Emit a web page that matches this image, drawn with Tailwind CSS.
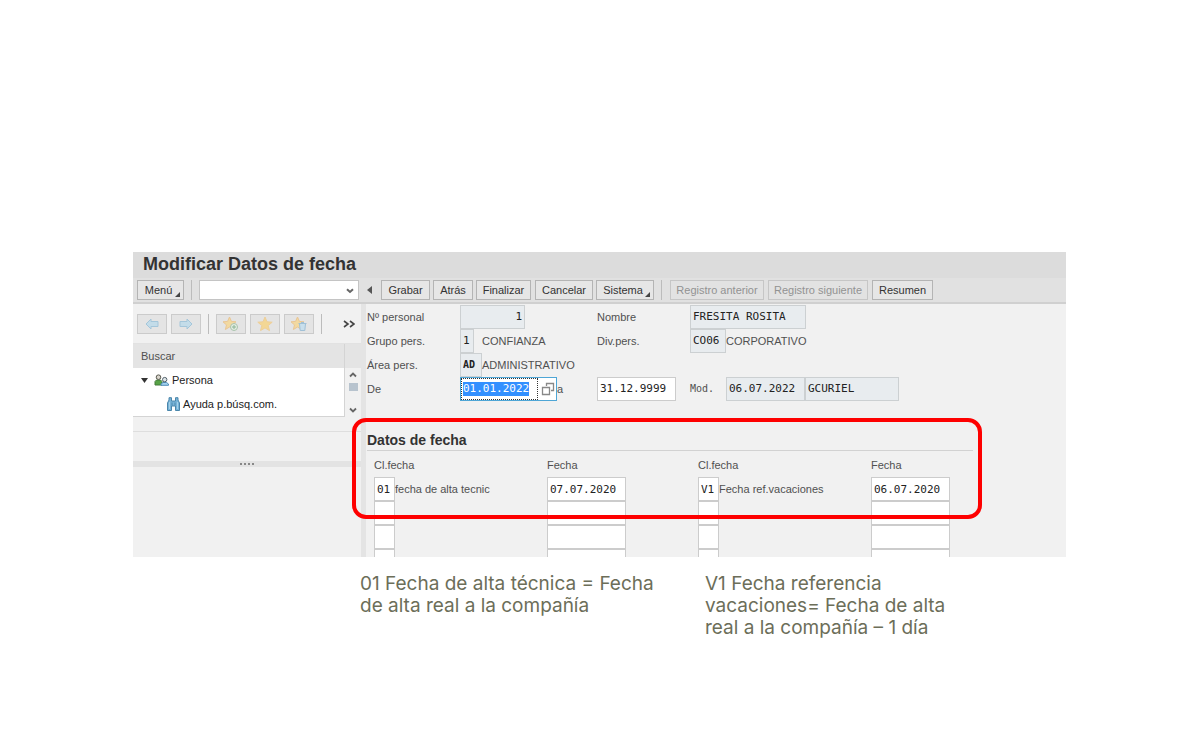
<!DOCTYPE html>
<html lang="es">
<head>
<meta charset="utf-8">
<title>Modificar Datos de fecha</title>
<script src="https://cdn.jsdelivr.net/npm/@tailwindcss/browser@4"></script>
</head>
<body class="min-h-screen bg-white text-[11px] leading-4 text-[#505050] font-['Liberation_Sans',Arial,sans-serif]">
<main class="pr-[134px] pl-[133px] pt-[252px]">
  <div class="bg-[#f1f1f1]">
    <header class="h-[26px] bg-[#dcdcdc] px-[10px]">
      <h1 class="text-[18px] leading-6 font-bold text-[#333]">Modificar Datos de fecha</h1>
    </header>

    <nav aria-label="Barra de herramientas" class="flex h-[26px] items-center border-b-2 border-[#d0d0d0] bg-[#e1e1e1] pl-1 text-[#333]">
      <button class="relative h-5 w-[47px] border border-[#b4b4b4] bg-[#e6e6e6] pr-1">Menú
        <svg class="absolute right-[3px] bottom-[2px] size-[5px]" viewBox="0 0 4 4"><path d="M4 0v4H0z" fill="#444"/></svg>
      </button>
      <span class="mx-[7px] h-5 w-px bg-[#bcbcbc]"></span>
      <div class="relative h-5 w-[160px]">
        <select aria-label="Comando" class="h-5 w-full appearance-none border border-[#c4c4c4] bg-white"><option></option></select>
        <svg class="pointer-events-none absolute top-[8px] right-[5px] h-[6px] w-2" viewBox="0 0 8 6"><path d="M1 1.2 4 4 7 1.2" fill="none" stroke="#666" stroke-width="2"/></svg>
      </div>
      <button aria-label="Contraer" class="mx-2 h-5 w-[6px]"><svg class="h-2 w-[5px]" viewBox="0 0 5 8"><path d="M5 0v8L0 4z" fill="#555"/></svg></button>
      <div class="flex gap-[3px]">
        <button class="h-5 w-[49px] border border-[#b4b4b4] bg-[#e6e6e6]">Grabar</button>
        <button class="h-5 w-10 border border-[#b4b4b4] bg-[#e6e6e6]">Atrás</button>
        <button class="h-5 w-[55px] border border-[#b4b4b4] bg-[#e6e6e6]">Finalizar</button>
        <button class="ml-px h-5 w-[58px] border border-[#b4b4b4] bg-[#e6e6e6]">Cancelar</button>
        <button class="relative h-5 w-[58px] border border-[#b4b4b4] bg-[#e6e6e6] pr-1">Sistema
          <svg class="absolute right-[3px] bottom-[2px] size-[5px]" viewBox="0 0 4 4"><path d="M4 0v4H0z" fill="#444"/></svg>
        </button>
      </div>
      <span class="mx-[7px] h-5 w-px bg-[#bcbcbc]"></span>
      <div class="flex gap-1">
        <button disabled class="ml-px h-5 w-[94px] border border-[#c6c6c6] bg-[#e2e2e2] text-[#929292]">Registro anterior</button>
        <button disabled class="h-5 w-[100px] border border-[#c6c6c6] bg-[#e2e2e2] text-[#929292]">Registro siguiente</button>
        <button class="h-5 w-[61px] border border-[#b4b4b4] bg-[#e6e6e6]">Resumen</button>
      </div>
    </nav>

    <div class="flex">
      <aside class="flex w-[228px] shrink-0 flex-col">
        <div class="flex h-10 items-center border-b border-[#e2e2e2] pl-1">
          <div class="flex gap-1">
            <button aria-label="Anterior" class="grid h-5 w-[30px] place-items-center border border-[#cbcbcb] bg-[#e4e4e4]">
              <svg class="h-3 w-[14px]" viewBox="0 0 14 12"><path d="M1 6 6 1v2.500h7v5H6V11z" fill="#c3dce9" stroke="#a4c6da"/></svg>
            </button>
            <button aria-label="Siguiente" class="grid h-5 w-[30px] place-items-center border border-[#cbcbcb] bg-[#e4e4e4]">
              <svg class="h-3 w-[14px]" viewBox="0 0 14 12"><path d="M13 6 8 1v2.500H1v5h7V11z" fill="#c3dce9" stroke="#a4c6da"/></svg>
            </button>
          </div>
          <span class="mx-[7px] h-5 w-px bg-[#bcbcbc]"></span>
          <div class="flex gap-1">
            <button aria-label="Añadir favorito" class="grid h-5 w-[30px] place-items-center border border-[#cbcbcb] bg-[#e4e4e4]">
              <svg class="h-4 w-[18px]" viewBox="0 0 18 16"><path d="m7.500 1 1.900 4.400 4.600.4-3.500 3.100 1.100 4.600-4.100-2.500-4.100 2.500 1.100-4.600L1 5.800l4.600-.4z" fill="#f2d9a0" stroke="#e9c695"/><circle cx="12" cy="11" r="3.500" fill="#e5eee5" stroke="#a9c3ac"/><path d="M12 9v4M10 11h4" stroke="#8db495"/></svg>
            </button>
            <button aria-label="Favoritos" class="grid h-5 w-[30px] place-items-center border border-[#cbcbcb] bg-[#e4e4e4]">
              <svg class="h-4 w-[16px]" viewBox="0 0 16 16"><path d="m8 1 2 4.800 5.200.4-4 3.400 1.300 5L8 11.900l-4.500 2.700 1.300-5-4-3.400L6 5.800z" fill="#f3d795" stroke="#edcf9a"/></svg>
            </button>
            <button aria-label="Borrar favorito" class="grid h-5 w-[30px] place-items-center border border-[#cbcbcb] bg-[#e4e4e4]">
              <svg class="h-4 w-[18px]" viewBox="0 0 18 16"><path d="m7.500 1 1.900 4.400 4.600.4-3.500 3.100 1.100 4.600-4.100-2.500-4.100 2.500 1.100-4.600L1 5.800l4.600-.4z" fill="#f2d9a0" stroke="#e9c695"/><path d="M8.500 7.500h8M9.500 8l.7 6.500h4.600l.7-6.500M11 6.500h3" fill="#c9dfec" stroke="#a0c0d6"/></svg>
            </button>
          </div>
          <span class="mx-[7px] h-5 w-px bg-[#bcbcbc]"></span>
          <button aria-label="Más" class="mr-[6px] ml-auto h-5 w-3"><svg class="h-2 w-3" viewBox="0 0 12 8"><path d="m1 1 4 3-4 3M7 1l4 3-4 3" fill="none" stroke="#444" stroke-width="1.600"/></svg></button>
        </div>
        <div class="flex h-[88px] border-b border-[#dedede]">
          <div class="flex-1">
            <h2 class="h-6 border-r border-[#d4d4d4] bg-[#e4e4e4] pl-2 leading-[25px]">Buscar</h2>
            <ul role="tree" class="border-r border-b border-[#d4d4d4] bg-white text-[#222]">
              <li role="treeitem" aria-expanded="true" class="flex h-6 items-center pl-2">
                <svg class="h-[5px] w-[7px]" viewBox="0 0 7 5"><path d="M0 0h7L3.500 5z" fill="#333"/></svg>
                <svg class="mr-[3px] ml-[6px] h-3 w-[15px]" viewBox="0 0 15 12"><path d="M1 11V7.500L2.500 6h4L8 7.500V11z" fill="#57a346" stroke="#427b39"/><circle cx="4.500" cy="3.200" r="2.300" fill="#d9d5cc" stroke="#59594f"/><path d="M7 11.300V10l2-1.500h3.500l2 1.500v1.300z" fill="#a3d1ed" stroke="#4f8db7"/><circle cx="10.700" cy="5.600" r="2.200" fill="#dde5e8" stroke="#55636c"/></svg>
                Persona
              </li>
              <li role="treeitem" class="flex h-6 items-center pl-[34px]">
                <svg class="mr-[3px] h-[14px] w-[13px]" viewBox="0 0 13 14"><path d="M.5 13.500V6L2 3V.7h2.500V4h4V.7H11V3l1.500 3v7.500h-4V9h-4v4.500z" fill="#78b3d7" stroke="#4a86ab"/><path d="M2.500 5v7M10.500 5v7" stroke="#a3d0e8"/><path d="M5 5.500v3M8 5.500v3" stroke="#4a86ab"/></svg>
                Ayuda p.búsq.com.
              </li>
            </ul>
          </div>
          <div class="w-4">
            <div class="h-6 bg-[#e4e4e4]"></div>
            <div class="flex h-[49px] flex-col items-center justify-between py-[4px]">
              <svg class="h-[6px] w-2" viewBox="0 0 8 6"><path d="M1 4.500 4 1.500l3 3" fill="none" stroke="#666" stroke-width="1.800"/></svg>
              <span class="mb-3 h-2 w-[9px] bg-[#b7c3ce]"></span>
              <svg class="h-[6px] w-2" viewBox="0 0 8 6"><path d="M1 1.500 4 4.500l3-3" fill="none" stroke="#666" stroke-width="1.800"/></svg>
            </div>
          </div>
        </div>
        <div class="mt-[29px] flex h-[6px] items-center justify-center gap-[2px] bg-[#e3e3e3]">
          <i class="size-[2px] bg-[#888]"></i><i class="size-[2px] bg-[#888]"></i><i class="size-[2px] bg-[#888]"></i><i class="size-[2px] bg-[#888]"></i>
        </div>
      </aside>

      <div class="w-[5px] shrink-0 bg-[#e4e4e4]"></div>

      <form class="min-w-0 flex-1 pt-px">
        <div class="grid grid-cols-[93px_137px_93px_1fr] pl-px leading-6">
          <label for="num">Nº personal</label>
          <input id="num" readonly value="1" class="h-6 w-[65px] border border-[#ccd0d2] bg-[#e8ecef] px-[2px] text-right font-['DejaVu_Sans_Mono',monospace] text-[#222]">
          <label for="nombre">Nombre</label>
          <input id="nombre" readonly value="FRESITA ROSITA" class="h-6 w-[116px] border border-[#ccd0d2] bg-[#e8ecef] px-[2px] font-['DejaVu_Sans_Mono',monospace] text-[#222]">

          <label for="grupo">Grupo pers.</label>
          <div class="flex gap-2"><input id="grupo" readonly value="1" class="h-6 w-[14px] border border-[#ccd0d2] bg-[#e8ecef] px-[2px] font-['DejaVu_Sans_Mono',monospace] text-[#222]">CONFIANZA</div>
          <label for="div">Div.pers.</label>
          <div class="flex"><input id="div" readonly value="CO06" class="h-6 w-9 border border-[#ccd0d2] bg-[#e8ecef] px-[2px] font-['DejaVu_Sans_Mono',monospace] text-[#222]">CORPORATIVO</div>

          <label for="area">Área pers.</label>
          <div class="flex"><input id="area" readonly value="AD" class="h-6 w-[22px] border border-[#ccd0d2] bg-[#e8ecef] px-[2px] font-['DejaVu_Sans_Mono',monospace] text-[10px] font-bold text-[#222]">ADMINISTRATIVO</div>
          <span></span><span></span>

          <label for="desde">De</label>
          <div class="flex items-center">
            <div class="flex h-6 w-[97px] items-center border border-[#4ea6d6] bg-white">
              <div class="relative">
                <span class="absolute inset-y-1 left-[2px] w-[66px] bg-[#3390ff]"></span>
                <input id="desde" value="01.01.2022" class="relative block h-[22px] w-[77px] border border-dotted border-[#333] px-px font-['DejaVu_Sans_Mono',monospace] text-white outline-none">
              </div>
              <button type="button" aria-label="Ayuda de búsqueda" class="ml-[3px]"><svg class="size-[14px]" viewBox="0 0 14 14"><path d="M5.500 4V1.500h7v7H10M1.500 5.500h7v7h-7z" fill="none" stroke="#888" stroke-width="1.300"/></svg></button>
            </div>
            <label for="hasta">a</label>
          </div>
          <div class="col-span-2 flex">
            <input id="hasta" value="31.12.9999" class="h-6 w-[79px] border border-[#ccc] bg-white px-[2px] font-['DejaVu_Sans_Mono',monospace] text-[#222]">
            <label for="mod" class="w-[50px] pl-[14px] font-['DejaVu_Sans_Mono',monospace] text-[10px]">Mod.</label>
            <input id="mod" readonly value="06.07.2022" class="h-6 w-[79px] border border-[#ccd0d2] bg-[#e8ecef] px-[2px] font-['DejaVu_Sans_Mono',monospace] text-[#222]">
            <input aria-label="Usuario" readonly value="GCURIEL" class="h-6 w-[94px] border border-[#ccd0d2] bg-[#e8ecef] px-[2px] font-['DejaVu_Sans_Mono',monospace] text-[#222]">
          </div>
        </div>

        <section class="relative mt-[27px] pl-px">
          <h2 class="mr-[93px] h-[23px] border-b border-[#d2d2d2] text-[14px] leading-6 font-bold text-[#333]">Datos de fecha</h2>
          <table class="ml-[7px] w-[576px] table-fixed border-collapse text-left">
            <thead>
              <tr class="h-[26px] align-middle">
                <th scope="col" class="w-[173px] pt-[2px] font-normal">Cl.fecha</th>
                <th scope="col" class="w-[151px] pt-[2px] font-normal">Fecha</th>
                <th scope="col" class="w-[173px] pt-[2px] font-normal">Cl.fecha</th>
                <th scope="col" class="w-[79px] pt-[2px] font-normal">Fecha</th>
              </tr>
            </thead>
            <tbody>
              <tr>
                <td><label class="flex items-center"><input value="01" class="h-6 w-[21px] border border-[#ccc] bg-white px-[2px] font-['DejaVu_Sans_Mono',monospace] text-[#222]">fecha de alta tecnic</label></td>
                <td><input aria-label="Fecha de alta técnica" value="07.07.2020" class="block h-6 w-[79px] border border-[#ccc] bg-white px-[2px] font-['DejaVu_Sans_Mono',monospace] text-[#222]"></td>
                <td><label class="flex items-center"><input value="V1" class="h-6 w-[21px] border border-[#ccc] bg-white px-[2px] font-['DejaVu_Sans_Mono',monospace] text-[#222]">Fecha ref.vacaciones</label></td>
                <td><input aria-label="Fecha de vacaciones" value="06.07.2020" class="block h-6 w-[79px] border border-[#ccc] bg-white px-[2px] font-['DejaVu_Sans_Mono',monospace] text-[#222]"></td>
              </tr>
              <tr>
                <td><input aria-label="Clase 3" class="block h-6 w-[21px] border border-[#ccc] bg-white"></td>
                <td><input aria-label="Fecha 3" class="block h-6 w-[79px] border border-[#ccc] bg-white"></td>
                <td><input aria-label="Clase 4" class="block h-6 w-[21px] border border-[#ccc] bg-white"></td>
                <td><input aria-label="Fecha 4" class="block h-6 w-[79px] border border-[#ccc] bg-white"></td>
              </tr>
              <tr>
                <td><input aria-label="Clase 5" class="block h-6 w-[21px] border border-[#ccc] bg-white"></td>
                <td><input aria-label="Fecha 5" class="block h-6 w-[79px] border border-[#ccc] bg-white"></td>
                <td><input aria-label="Clase 6" class="block h-6 w-[21px] border border-[#ccc] bg-white"></td>
                <td><input aria-label="Fecha 6" class="block h-6 w-[79px] border border-[#ccc] bg-white"></td>
              </tr>
              <tr>
                <td><input aria-label="Clase 7" class="block h-2 w-[21px] border border-b-0 border-[#ccc] bg-white"></td>
                <td><input aria-label="Fecha 7" class="block h-2 w-[79px] border border-b-0 border-[#ccc] bg-white"></td>
                <td><input aria-label="Clase 8" class="block h-2 w-[21px] border border-b-0 border-[#ccc] bg-white"></td>
                <td><input aria-label="Fecha 8" class="block h-2 w-[79px] border border-b-0 border-[#ccc] bg-white"></td>
              </tr>
            </tbody>
          </table>
          <div class="pointer-events-none absolute -top-[10px] right-[84px] -left-[14px] h-[101px] rounded-[14px] border-4 border-[#fe0000]"></div>
        </section>
      </form>
    </div>
  </div>

  <div class="grid grid-cols-[345px_1fr] pt-4 pl-[227px] text-[19px] leading-[22px] font-normal text-[#6c6e59] font-[Inter,sans-serif]">
    <p>01 Fecha de alta técnica = Fecha<br>de alta real a la compañía</p>
    <p>V1 Fecha referencia<br>vacaciones= Fecha de alta<br>real a la compañía – 1 día</p>
  </div>
</main>
</body>
</html>
